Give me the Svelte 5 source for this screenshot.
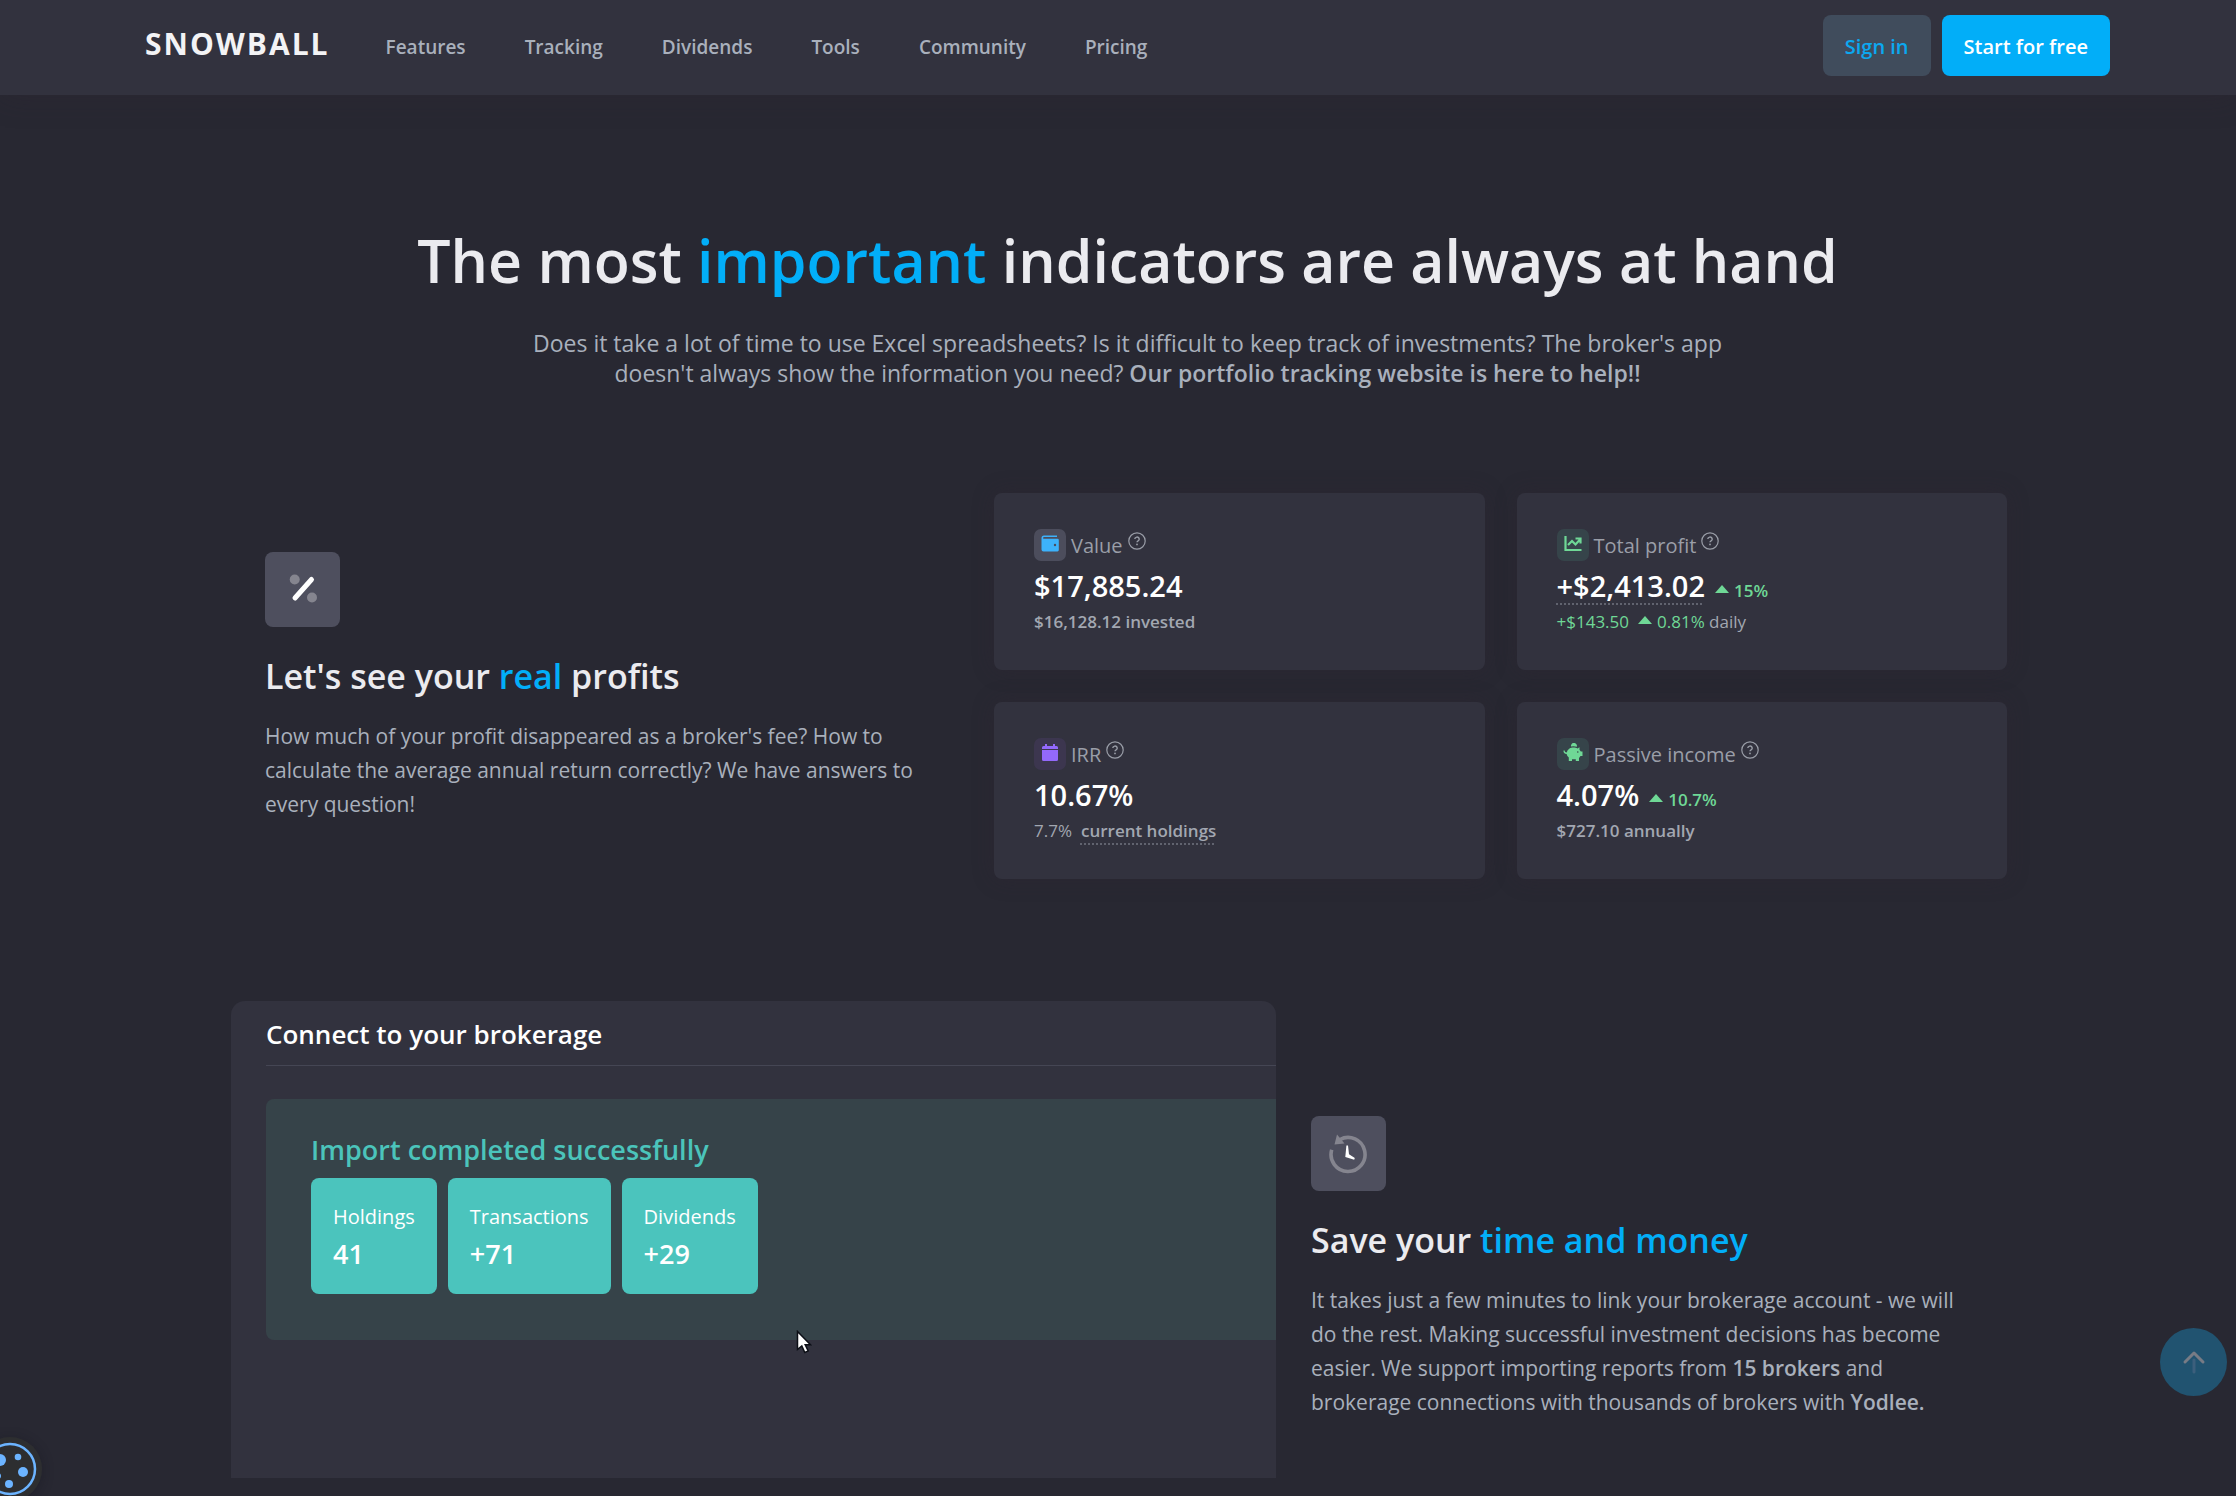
<script>
  const links = ['Features', 'Tracking', 'Dividends', 'Tools', 'Community', 'Pricing'];
  const imported = [
    { label: 'Holdings', value: '41' },
    { label: 'Transactions', value: '+71' },
    { label: 'Dividends', value: '+29' }
  ];
</script>

{#snippet help()}
  <svg class="help" viewBox="0 0 18 18" aria-hidden="true">
    <circle cx="9" cy="9" r="8.2" fill="none" stroke="currentColor" stroke-width="1.2" />
    <path d="M6.8 7.1a2.2 2 0 1 1 3.3 1.7c-.8.4-1.1.8-1.1 1.5" fill="none" stroke="currentColor" stroke-width="1.4" />
    <circle cx="9" cy="12.4" r=".9" fill="currentColor" />
  </svg>
{/snippet}

{#snippet up()}
  <svg class="up" viewBox="0 0 14 8" aria-hidden="true"><path d="M7 0 14 8H0z" fill="currentColor" /></svg>
{/snippet}

<div class="page">
  <header>
    <a class="logo" href="#home">SNOWBALL</a>
    <nav>
      {#each links as link}
        <a href="#{link.toLowerCase()}">{link}</a>
      {/each}
    </nav>
    <div class="actions">
      <button class="signin">Sign in</button>
      <button class="start">Start for free</button>
    </div>
  </header>

  <main>
    <section class="hero">
      <h1>The most <em>important</em> indicators are always at hand</h1>
      <p>
        Does it take a lot of time to use Excel spreadsheets? Is it difficult to keep track of investments? The broker's app
        <br />doesn't always show the information you need? <b>Our portfolio tracking website is here to help!!</b>
      </p>
    </section>

    <section class="profits">
      <div class="copy">
        <span class="tile">
          <svg viewBox="0 0 40 40" aria-hidden="true">
            <circle cx="11.700" cy="10.500" r="5" fill="#85858f" />
            <circle cx="29" cy="28.500" r="5" fill="#85858f" />
            <path d="M12 29 28.500 10.500" stroke="#fff" stroke-width="5" stroke-linecap="round" />
          </svg>
        </span>
        <h2>Let's see your <em>real</em> profits</h2>
        <p>How much of your profit disappeared as a broker's fee? How to calculate the average annual return correctly? We have answers to every question!</p>
      </div>

      <div class="cards">
        <article>
          <div class="name">
            <span class="badge gray">
              <svg viewBox="0 0 20 20" aria-hidden="true">
                <path d="M4 1.500h13v1.500H4a.9.900 0 0 0 0 1.800h13.500a1.300 1.300 0 0 1 1.300 1.300v10a1.300 1.300 0 0 1-1.300 1.300h-14a2 2 0 0 1-2-2V4A2.500 2.500 0 0 1 4 1.500z" fill="#3db2fb" />
                <circle cx="15" cy="11" r="1.200" fill="#4c4d5c" />
              </svg>
            </span>
            <span>Value</span>{@render help()}
          </div>
          <div class="figure"><strong>$17,885.24</strong></div>
          <div class="note"><b>$16,128.12 invested</b></div>
        </article>

        <article>
          <div class="name">
            <span class="badge green">
              <svg viewBox="0 0 20 20" aria-hidden="true">
                <path d="M2.500 2v14h16M5 11l4-4 3.500 3.500 4.500-5M12.500 4.500h5v5" fill="none" stroke="#6fd896" stroke-width="2.200" />
              </svg>
            </span>
            <span>Total profit</span>{@render help()}
          </div>
          <div class="figure"><strong class="dotted">+$2,413.02</strong><span class="rise">{@render up()}15%</span></div>
          <div class="note"><span class="gain">+$143.50</span><span class="gain daily">{@render up()}0.81%</span> daily</div>
        </article>

        <article>
          <div class="name">
            <span class="badge violet">
              <svg viewBox="0 0 20 20" aria-hidden="true">
                <path d="M5 1h2v2h6V1h2v2h1.500A1.500 1.500 0 0 1 18 4.500V6H2V4.500A1.500 1.500 0 0 1 3.500 3H5zM2 7h16v9.500a1.500 1.500 0 0 1-1.500 1.500h-13A1.500 1.500 0 0 1 2 16.500z" fill="#9369fb" />
              </svg>
            </span>
            <span>IRR</span>{@render help()}
          </div>
          <div class="figure"><strong>10.67%</strong></div>
          <div class="note"><span class="rate">7.7%</span><b class="dotted">current holdings</b></div>
        </article>

        <article>
          <div class="name">
            <span class="badge green">
              <svg viewBox="0 0 20 20" aria-hidden="true">
                <path d="M8 3.500a3 3 0 1 1 5.800.3A9 9 0 0 0 8 3.500z" fill="#6fd896" />
                <path d="M6.500 5.500c2-1.200 6-1.200 8 0l2-1.200v2.500l1.300 1.800h1.700v4.500h-2l-1.500 1.800V18h-3.200v-1.800H9V18H5.800v-3.500A6 6 0 0 1 3.600 11C1.500 11 .3 9.500.5 7.500h1.200c0 1.300.7 2 2 2A6 6 0 0 1 6.500 5.500z" fill="#6fd896" />
                <circle cx="14.800" cy="9" r=".8" fill="#36444a" />
              </svg>
            </span>
            <span>Passive income</span>{@render help()}
          </div>
          <div class="figure"><strong>4.07%</strong><span class="rise">{@render up()}10.7%</span></div>
          <div class="note"><b>$727.10 annually</b></div>
        </article>
      </div>
    </section>

    <section class="import">
      <div class="panel">
        <h3>Connect to your brokerage</h3>
        <div class="result">
          <h4>Import completed successfully</h4>
          <dl>
            {#each imported as item}
              <div>
                <dt>{item.label}</dt>
                <dd>{item.value}</dd>
              </div>
            {/each}
          </dl>
        </div>
        <svg class="pointer" viewBox="0 0 16 24" aria-hidden="true">
          <path d="M1.500 1.500v18l4.300-3.600 3 6.600 3.400-1.500-3-6.300h5.300z" fill="#fff" stroke="#0c0f16" stroke-width="1.500" />
        </svg>
      </div>

      <div class="copy">
        <span class="tile">
          <svg viewBox="0 0 40 40" aria-hidden="true">
            <path d="M2.700 15.800A17 17 0 1 0 11 5.500" fill="none" stroke="#85858f" stroke-width="3.600" />
            <path d="M8 .5 15.500 9.500 5.500 10.500z" fill="#85858f" />
            <path d="M17.400 11.500h1.600l1 8.800 5.800 3.700-.6 1.700-8.900-2.700z" fill="#fff" />
          </svg>
        </span>
        <h2>Save your <em>time and money</em></h2>
        <p>It takes just a few minutes to link your brokerage account - we will do the rest. Making successful investment decisions has become easier. We support importing reports from <b>15 brokers</b> and brokerage connections with thousands of brokers with <b>Yodlee.</b></p>
      </div>
    </section>
  </main>

  <button class="top" aria-label="Scroll to top">
    <svg viewBox="0 0 24 24" aria-hidden="true">
      <path d="M12 10v12" stroke="#3c5f7c" stroke-width="3" stroke-linecap="round" />
      <path d="M3 12 12 3l9 9" fill="none" stroke="#777b85" stroke-width="3" stroke-linecap="round" stroke-linejoin="round" />
    </svg>
  </button>

  <button class="cookie" aria-label="Cookie settings">
    <svg viewBox="0 0 64 64" aria-hidden="true">
      <circle cx="32" cy="32" r="32" fill="#2d2e30" />
      <circle cx="32" cy="32" r="25" fill="none" stroke="#6cb4ff" stroke-width="2.500" />
      <g fill="#6cb4ff">
        <circle cx="22" cy="23" r="6" />
        <circle cx="40" cy="20" r="3.300" />
        <circle cx="45" cy="35" r="5" />
        <circle cx="31" cy="47" r="4" />
        <circle cx="20" cy="39" r="3" />
      </g>
    </svg>
  </button>
</div>

<style>
  :global(body) {
    background: #282832;
  }
  .page {
    min-height: 100vh;
    overflow: hidden;
    box-sizing: border-box;
    background: #282832;
    color: #a9b0bc;
    font-family: 'Open Sans', 'Noto Sans', sans-serif;
  }
  h1, h2, h3, h4, p, dl, dd {
    margin: 0;
  }
  em {
    font-style: normal;
    color: #02aef8;
  }
  b {
    font-weight: 600;
  }
  button {
    border: 0;
    padding: 0;
    font: inherit;
    cursor: pointer;
  }
  header {
    display: flex;
    align-items: center;
    box-sizing: border-box;
    height: 95px;
    padding: 0 126px 4px 145px;
    background: #32323e;
    box-shadow: 0 0 30px rgba(50, 35, 50, 0.3);
  }
  .logo {
    padding-bottom: 3px;
    color: #f3f3f5;
    font-size: 30px;
    line-height: 40px;
    font-weight: 700;
    letter-spacing: 2px;
    text-decoration: none;
  }
  nav {
    display: flex;
    gap: 59px;
    margin-left: 56px;
    padding-top: 2px;
  }
  nav a {
    color: #a9b0bc;
    font-size: 19px;
    line-height: 30px;
    font-weight: 600;
    text-decoration: none;
  }
  .actions {
    display: flex;
    gap: 11px;
    margin-left: auto;
  }
  .actions button {
    padding: 16px 22px 14px;
    border-radius: 8px;
    font-size: 20px;
    line-height: 31px;
    font-weight: 600;
    white-space: nowrap;
  }
  .signin {
    background: #404c5c;
    color: #0ba8f0;
  }
  .start {
    background: #02aef8;
    color: #fff;
  }
  main {
    padding: 127px 212px 18px 231px;
  }
  .hero {
    text-align: center;
  }
  h1 {
    color: #ebebef;
    font-size: 59px;
    line-height: 76px;
    font-weight: 600;
  }
  .hero p {
    margin-top: 30px;
    font-size: 23px;
    line-height: 30px;
  }
  .profits {
    display: grid;
    grid-template-columns: 695fr 1013fr;
    gap: 34px;
    align-items: center;
    margin-top: 105px;
    padding: 0 17px 0 34px;
  }
  .tile {
    display: flex;
    align-items: center;
    justify-content: center;
    width: 75px;
    height: 75px;
    border-radius: 8px;
    background: #4e4f5e;
  }
  .tile svg {
    width: 40px;
    height: 40px;
  }
  h2 {
    margin-top: 26px;
    color: #ebebef;
    font-size: 34px;
    line-height: 46px;
    font-weight: 600;
  }
  .copy p {
    margin-top: 20px;
    font-size: 21px;
    line-height: 34px;
  }
  .cards {
    display: grid;
    grid-template-columns: 1fr 1fr;
    gap: 32px;
  }
  article {
    padding: 36px 40px 34px;
    border-radius: 8px;
    background: #32323e;
    box-shadow: 0 0 22px rgba(50, 35, 50, 0.3);
  }
  .name {
    display: flex;
    align-items: center;
    gap: 5px;
    height: 32px;
    color: #9a9ea8;
    font-size: 20px;
    line-height: 32px;
  }
  .name span:not(.badge) {
    padding-top: 2px;
  }
  .badge {
    display: flex;
    align-items: center;
    justify-content: center;
    width: 32px;
    height: 32px;
    border-radius: 7px;
  }
  .badge svg {
    width: 20px;
    height: 20px;
    margin-bottom: 3px;
  }
  .gray { background: #4c4d5c; }
  .green { background: #36444a; }
  .violet { background: #3c364f; }
  .help {
    width: 18px;
    height: 18px;
    margin-bottom: 8px;
  }
  .figure {
    display: flex;
    align-items: baseline;
    gap: 10px;
    height: 42px;
    margin-top: 5px;
    color: #fff;
    font-size: 29px;
    line-height: 40px;
  }
  .figure strong {
    font-weight: 600;
  }
  .dotted {
    text-decoration: underline dotted 2px #61636f;
    text-decoration-skip-ink: none;
    text-underline-offset: 6px;
  }
  .up {
    width: 14px;
    height: 8px;
    margin-right: 5px;
    vertical-align: 4px;
  }
  .rise {
    color: #6fd896;
    font-size: 17px;
    line-height: 24px;
    font-weight: 600;
  }
  .note {
    color: #a2a7b1;
    font-size: 17px;
    line-height: 28px;
  }
  .rate {
    margin-right: 9px;
  }
  .gain {
    color: #6fd896;
  }
  .daily {
    margin-left: 9px;
  }
  .import {
    display: grid;
    grid-template-columns: 1045fr 713fr;
    gap: 35px;
    align-items: start;
    margin-top: 122px;
  }
  .panel {
    position: relative;
    box-sizing: border-box;
    min-height: 477px;
    padding-left: 35px;
    border-radius: 14px 14px 0 0;
    background: #32323e;
  }
  h3 {
    padding: 15px 0 13px;
    border-bottom: 1px solid #454654;
    color: #fff;
    font-size: 26px;
    line-height: 36px;
    font-weight: 600;
  }
  .result {
    margin-top: 33px;
    padding: 31px 45px 46px;
    border-radius: 8px 0 0 8px;
    background: #364349;
  }
  h4 {
    color: #4bc4bb;
    font-size: 27px;
    line-height: 40px;
    font-weight: 600;
  }
  dl {
    display: flex;
    gap: 11px;
    margin-top: 8px;
  }
  dl div {
    padding: 22px 22px 21px;
    border-radius: 8px;
    background: #4bc4bd;
    color: #fff;
  }
  dt {
    font-size: 20px;
    line-height: 34px;
  }
  dd {
    font-size: 27px;
    line-height: 39px;
    font-weight: 600;
  }
  .pointer {
    position: absolute;
    left: 565px;
    top: 329px;
    width: 16px;
    height: 24px;
  }
  .import .copy {
    max-width: 665px;
    padding-top: 115px;
  }
  .top {
    position: fixed;
    right: 9px;
    bottom: 100px;
    display: flex;
    align-items: center;
    justify-content: center;
    width: 67px;
    height: 68px;
    border-radius: 50%;
    background: #215370;
  }
  .top svg {
    width: 24px;
    height: 24px;
  }
  .cookie {
    position: fixed;
    left: -22px;
    bottom: -5px;
    width: 64px;
    height: 64px;
    border-radius: 50%;
    background: none;
    box-shadow: 0 2px 12px rgba(20, 20, 30, 0.4);
  }
  .cookie svg {
    display: block;
  }
</style>
